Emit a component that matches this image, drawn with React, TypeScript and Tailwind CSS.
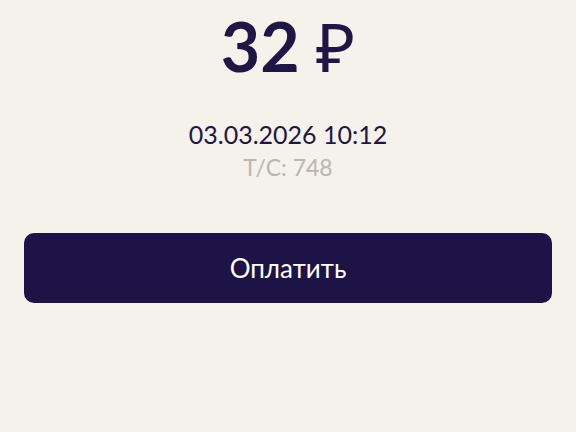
export default function App() {
  return (
    <div className="w-[576px] h-[432px] bg-[#f5f1eb] flex flex-col items-center" style={{ fontFamily: '"Lato", "Noto Sans", sans-serif' }}>
      <div className="mt-[6px] flex items-baseline gap-[16px] text-[68px] leading-[80px] text-[#1e1745]">
        <span className="font-bold">32</span>
        <span className="font-normal">₽</span>
      </div>
      <div className="mt-[32px] text-[25px] leading-[32px] text-[#1e1745]">03.03.2026 10:12</div>
      <div className="mt-[2px] text-[23px] leading-[30px] text-[#bab6b1]">Т/С: 748</div>
      <button className="mt-[51px] w-[528px] h-[70px] rounded-[10px] bg-[#1e1346] text-white text-[26px]">Оплатить</button>
    </div>
  );
}
